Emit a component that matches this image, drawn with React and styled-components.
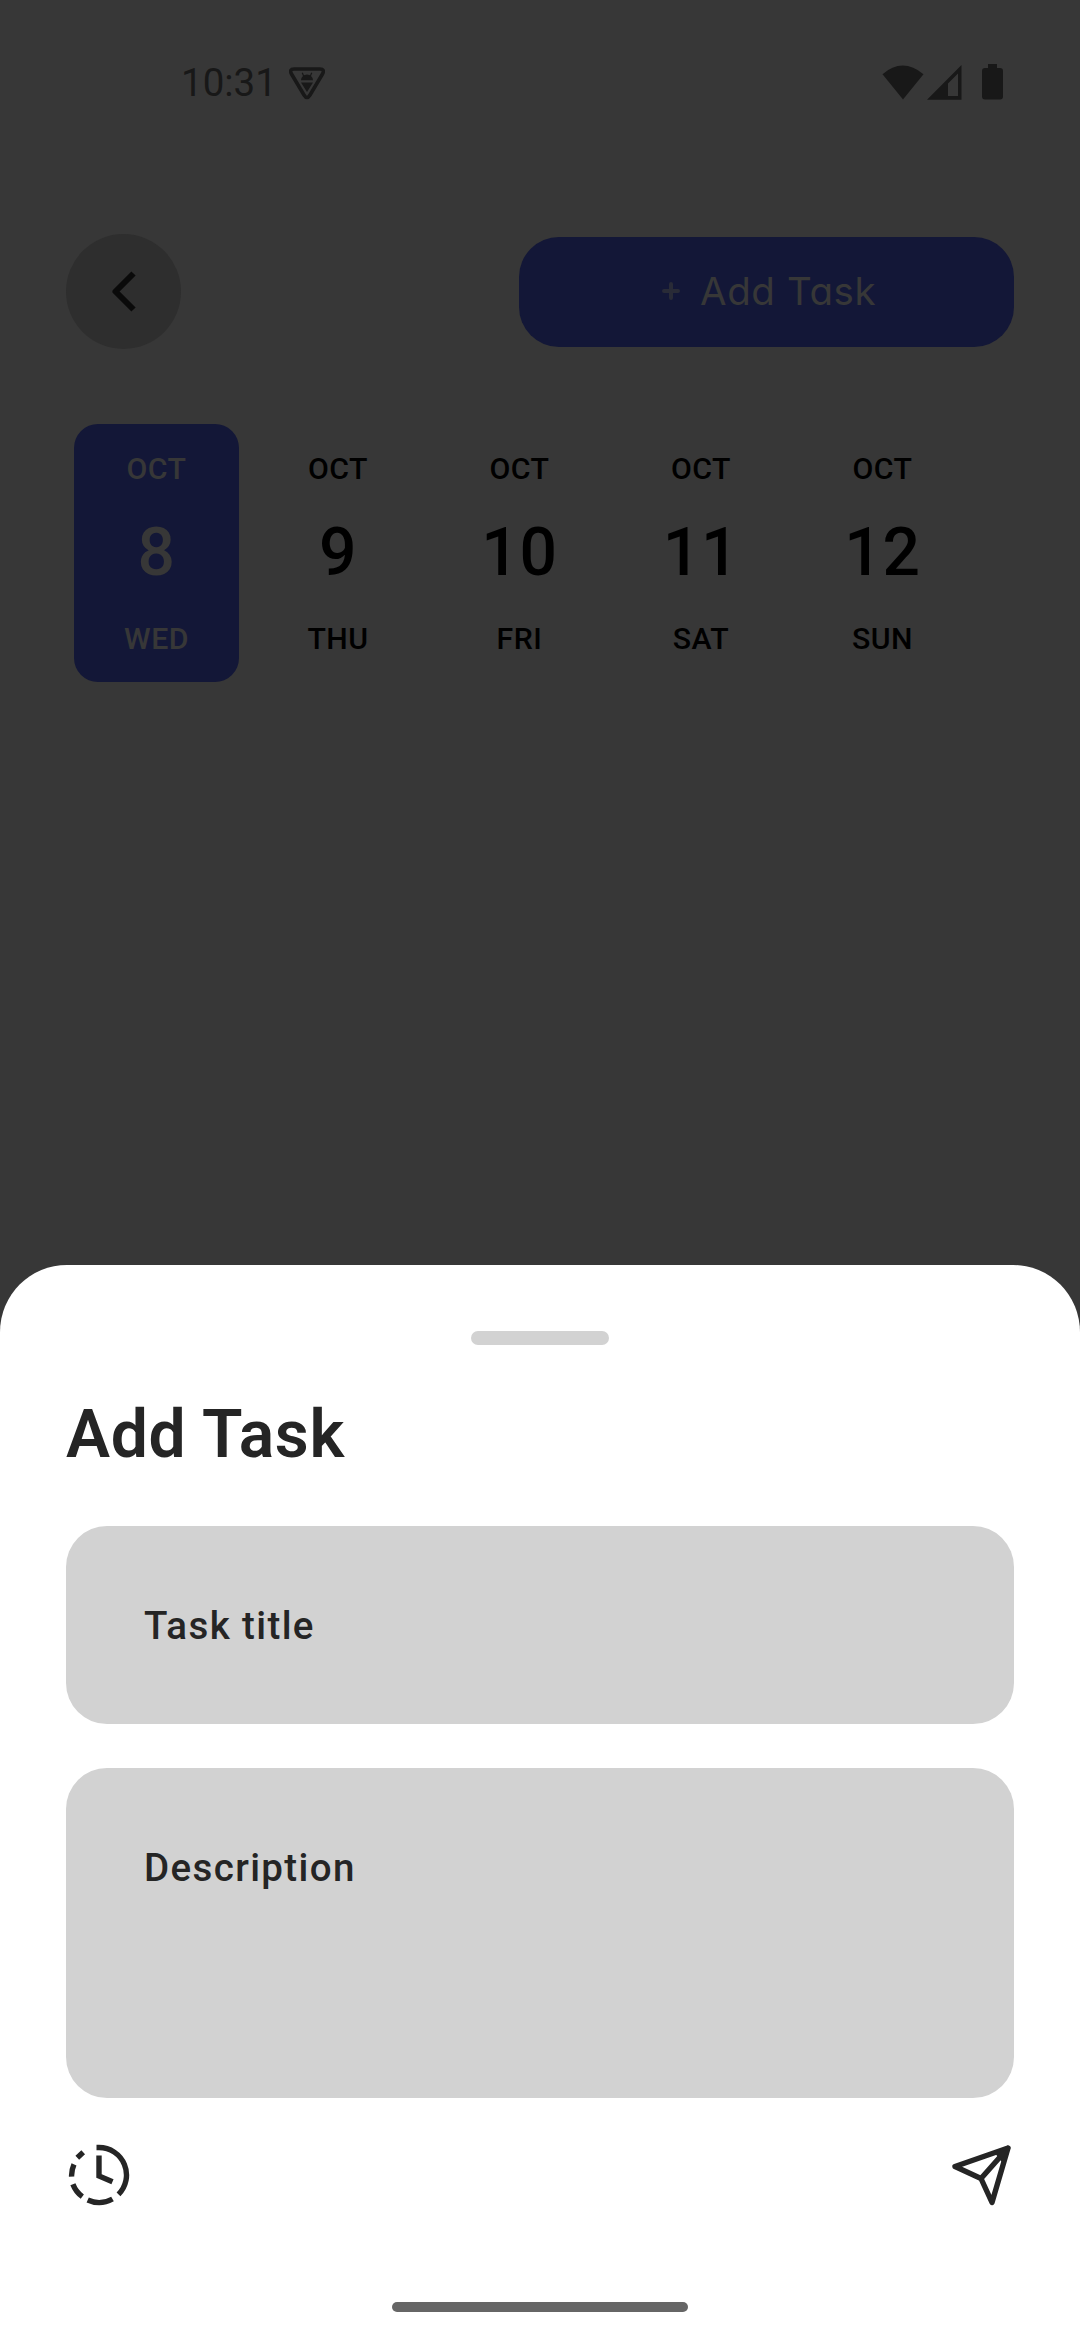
import React from "react";
import styled, { createGlobalStyle } from "styled-components";

const GlobalStyle = createGlobalStyle`
  * { box-sizing: border-box; }
  body { margin: 0; background: #373737; }
`;

const Screen = styled.div`
  width: 1080px;
  height: 2340px;
  display: flex;
  flex-direction: column;
  overflow: hidden;
  background: #373737;
  font-family: Roboto, "Liberation Sans", sans-serif;
`;

const Backdrop = styled.div`
  height: 1265px;
  flex: none;
  display: flex;
  flex-direction: column;
`;

const StatusBar = styled.header`
  height: 234px;
  padding: 60px 76px 0 181px;
  display: flex;
  justify-content: space-between;
  align-items: flex-start;
  color: #181818;
`;

const StatusGroup = styled.div`
  display: flex;
  align-items: center;
  height: 44px;
  padding-top: ${(p) => p.$drop || 0}px;
`;

const Clock = styled.span`
  width: 108px;
  font-size: 38.5px;
  line-height: 44px;
`;

const TopBar = styled.div`
  height: 115px;
  padding: 0 66px;
  display: flex;
  justify-content: space-between;
  align-items: center;
`;

const BackButton = styled.button`
  width: 115px;
  height: 115px;
  padding: 0;
  border: 0;
  border-radius: 50%;
  background: #2e2e2e;
  display: flex;
`;

const AddButton = styled.button`
  width: 495px;
  height: 110px;
  padding: 0 0 1px 143px;
  border: 0;
  border-radius: 40px;
  background: #131737;
  color: #373737;
  display: flex;
  align-items: center;
  gap: 20px;
`;

const AddLabel = styled.span`
  font-family: Inter, sans-serif;
  font-feature-settings: "cv11";
  font-weight: 400;
  font-size: 38.5px;
  line-height: 54px;
  letter-spacing: 0.6px;
  white-space: nowrap;
`;

const Days = styled.div`
  display: flex;
  gap: 16.5px;
  padding: 75px 0 0 74px;
`;

const Day = styled.div`
  width: 165px;
  height: 258px;
  padding-top: 26px;
  border-radius: 24px;
  display: flex;
  flex-direction: column;
  align-items: center;
  background: ${(p) => (p.$selected ? "#131737" : "transparent")};
  color: ${(p) => (p.$selected ? "#373737" : "#000")};
  font-weight: 500;
`;

const DayLabel = styled.span`
  font-size: 30.25px;
  line-height: 38px;
  letter-spacing: 0.5px;
`;

const DayNumber = styled.span`
  font-size: 66px;
  line-height: 80px;
  margin: 25px 0 27px;
  letter-spacing: 0.7px;
`;

const Sheet = styled.section`
  flex: 1;
  padding: 66px 66px 0;
  border-radius: 67px 67px 0 0;
  background: #fff;
  color: #252525;
  display: flex;
  flex-direction: column;
`;

const Handle = styled.div`
  align-self: center;
  width: 138px;
  height: 14px;
  border-radius: 7px;
  background: #d2d2d2;
`;

const Title = styled.h1`
  margin: 49px 0 51px;
  font-size: 66px;
  line-height: 81px;
  font-weight: 600;
  letter-spacing: 0.7px;
`;

const Field = styled.div`
  height: ${(p) => p.$height}px;
  margin-bottom: ${(p) => p.$gap}px;
  padding: 77px 78px;
  border-radius: 41px;
  background: #d2d2d2;
  font-size: 38.5px;
  line-height: 46px;
  font-weight: 500;
  letter-spacing: 1.375px;
`;

const Actions = styled.div`
  display: flex;
  justify-content: space-between;
  height: 66px;
`;

const HomeIndicator = styled.div`
  align-self: center;
  width: 296px;
  height: 10px;
  margin-top: 94px;
  border-radius: 5px;
  background: #666;
`;

const days = [
  ["8", "WED"],
  ["9", "THU"],
  ["10", "FRI"],
  ["11", "SAT"],
  ["12", "SUN"],
];

const ShieldIcon = () => (
  <svg width="36" height="33" viewBox="0 0 36 33">
    <path d="M5 2H31Q36 2 33.500 7L21 28Q18 33 15 28L2.500 7Q0 2 5 2Z" fill="none" stroke="#181818" strokeWidth="3.6" strokeLinejoin="round" />
    <path d="M12 13.200A6 5.600 0 0 1 24 13.200ZM12 15.500H24L18 25Z" fill="#181818" />
    <path d="M14.800 9.500L13.300 5.800M21.200 9.500L22.700 5.800" stroke="#181818" strokeWidth="1.2" />
  </svg>
);

const SystemIcons = () => (
  <svg width="122" height="38" viewBox="0 0 122 38" fill="#181818">
    <path d="M0.500 11.200Q20.500 -6 41.500 11.200L21 36.500Z" />
    <path fillRule="evenodd" d="M45 36.700L79.500 2V36.700ZM66 33H76V10.500L66 20.500Z" />
    <path d="M106 1H115V5H118Q121 5 121 8V33.500Q121 36.500 118 36.500H103Q100 36.500 100 33.500V8Q100 5 103 5H106Z" />
  </svg>
);

const BackIcon = () => (
  <svg width="115" height="115" viewBox="0 0 115 115" fill="none" stroke="#0a0a0a" strokeWidth="6" strokeLinejoin="round">
    <path d="M67.500 39.500L49.500 57.500L67.500 75.500" />
  </svg>
);

const PlusIcon = () => (
  <svg width="18" height="18" viewBox="0 0 18 18" stroke="#292b37" strokeWidth="4" strokeLinecap="round">
    <path d="M2 9H16M9 2V16" />
  </svg>
);

const TimerIcon = () => (
  <svg width="66" height="66" viewBox="0 0 66 66" fill="none" stroke="#252525" strokeWidth="5.4">
    <path d="M30.500 5.500H33A27.500 27.500 0 0 1 52.500 52.400M46.500 57A27.500 27.500 0 0 1 21.700 58M16.300 54.700A27.500 27.500 0 0 1 6.900 42.300M5.600 34.700A27.500 27.500 0 0 1 8 22.300M11.300 15.800L17.200 10.300" />
    <path d="M33 13.500V34L46.500 39.800" />
  </svg>
);

const SendIcon = () => (
  <svg width="66" height="66" viewBox="0 0 66 66" fill="none" stroke="#252525" strokeWidth="5.4" strokeLinejoin="round" strokeLinecap="round">
    <path d="M60 6L7 24.500L33 36.500L44 60.500ZM60 6L33 36.500" />
    <path d="M60 6L48 11L55 20Z" fill="#252525" strokeWidth="2" />
  </svg>
);

export default function App() {
  return (
    <Screen>
      <GlobalStyle />
      <Backdrop>
        <StatusBar>
          <StatusGroup $drop={2}>
            <Clock>10:31</Clock>
            <ShieldIcon />
          </StatusGroup>
          <StatusGroup>
            <SystemIcons />
          </StatusGroup>
        </StatusBar>
        <TopBar>
          <BackButton aria-label="Back">
            <BackIcon />
          </BackButton>
          <AddButton>
            <PlusIcon />
            <AddLabel>Add Task</AddLabel>
          </AddButton>
        </TopBar>
        <Days>
          {days.map(([number, name], i) => (
            <Day key={number} $selected={i === 0}>
              <DayLabel>OCT</DayLabel>
              <DayNumber>{number}</DayNumber>
              <DayLabel>{name}</DayLabel>
            </Day>
          ))}
        </Days>
      </Backdrop>
      <Sheet>
        <Handle />
        <Title>Add Task</Title>
        <Field $height={198} $gap={44}>Task title</Field>
        <Field $height={330} $gap={44}>Description</Field>
        <Actions>
          <TimerIcon />
          <SendIcon />
        </Actions>
        <HomeIndicator />
      </Sheet>
    </Screen>
  );
}
